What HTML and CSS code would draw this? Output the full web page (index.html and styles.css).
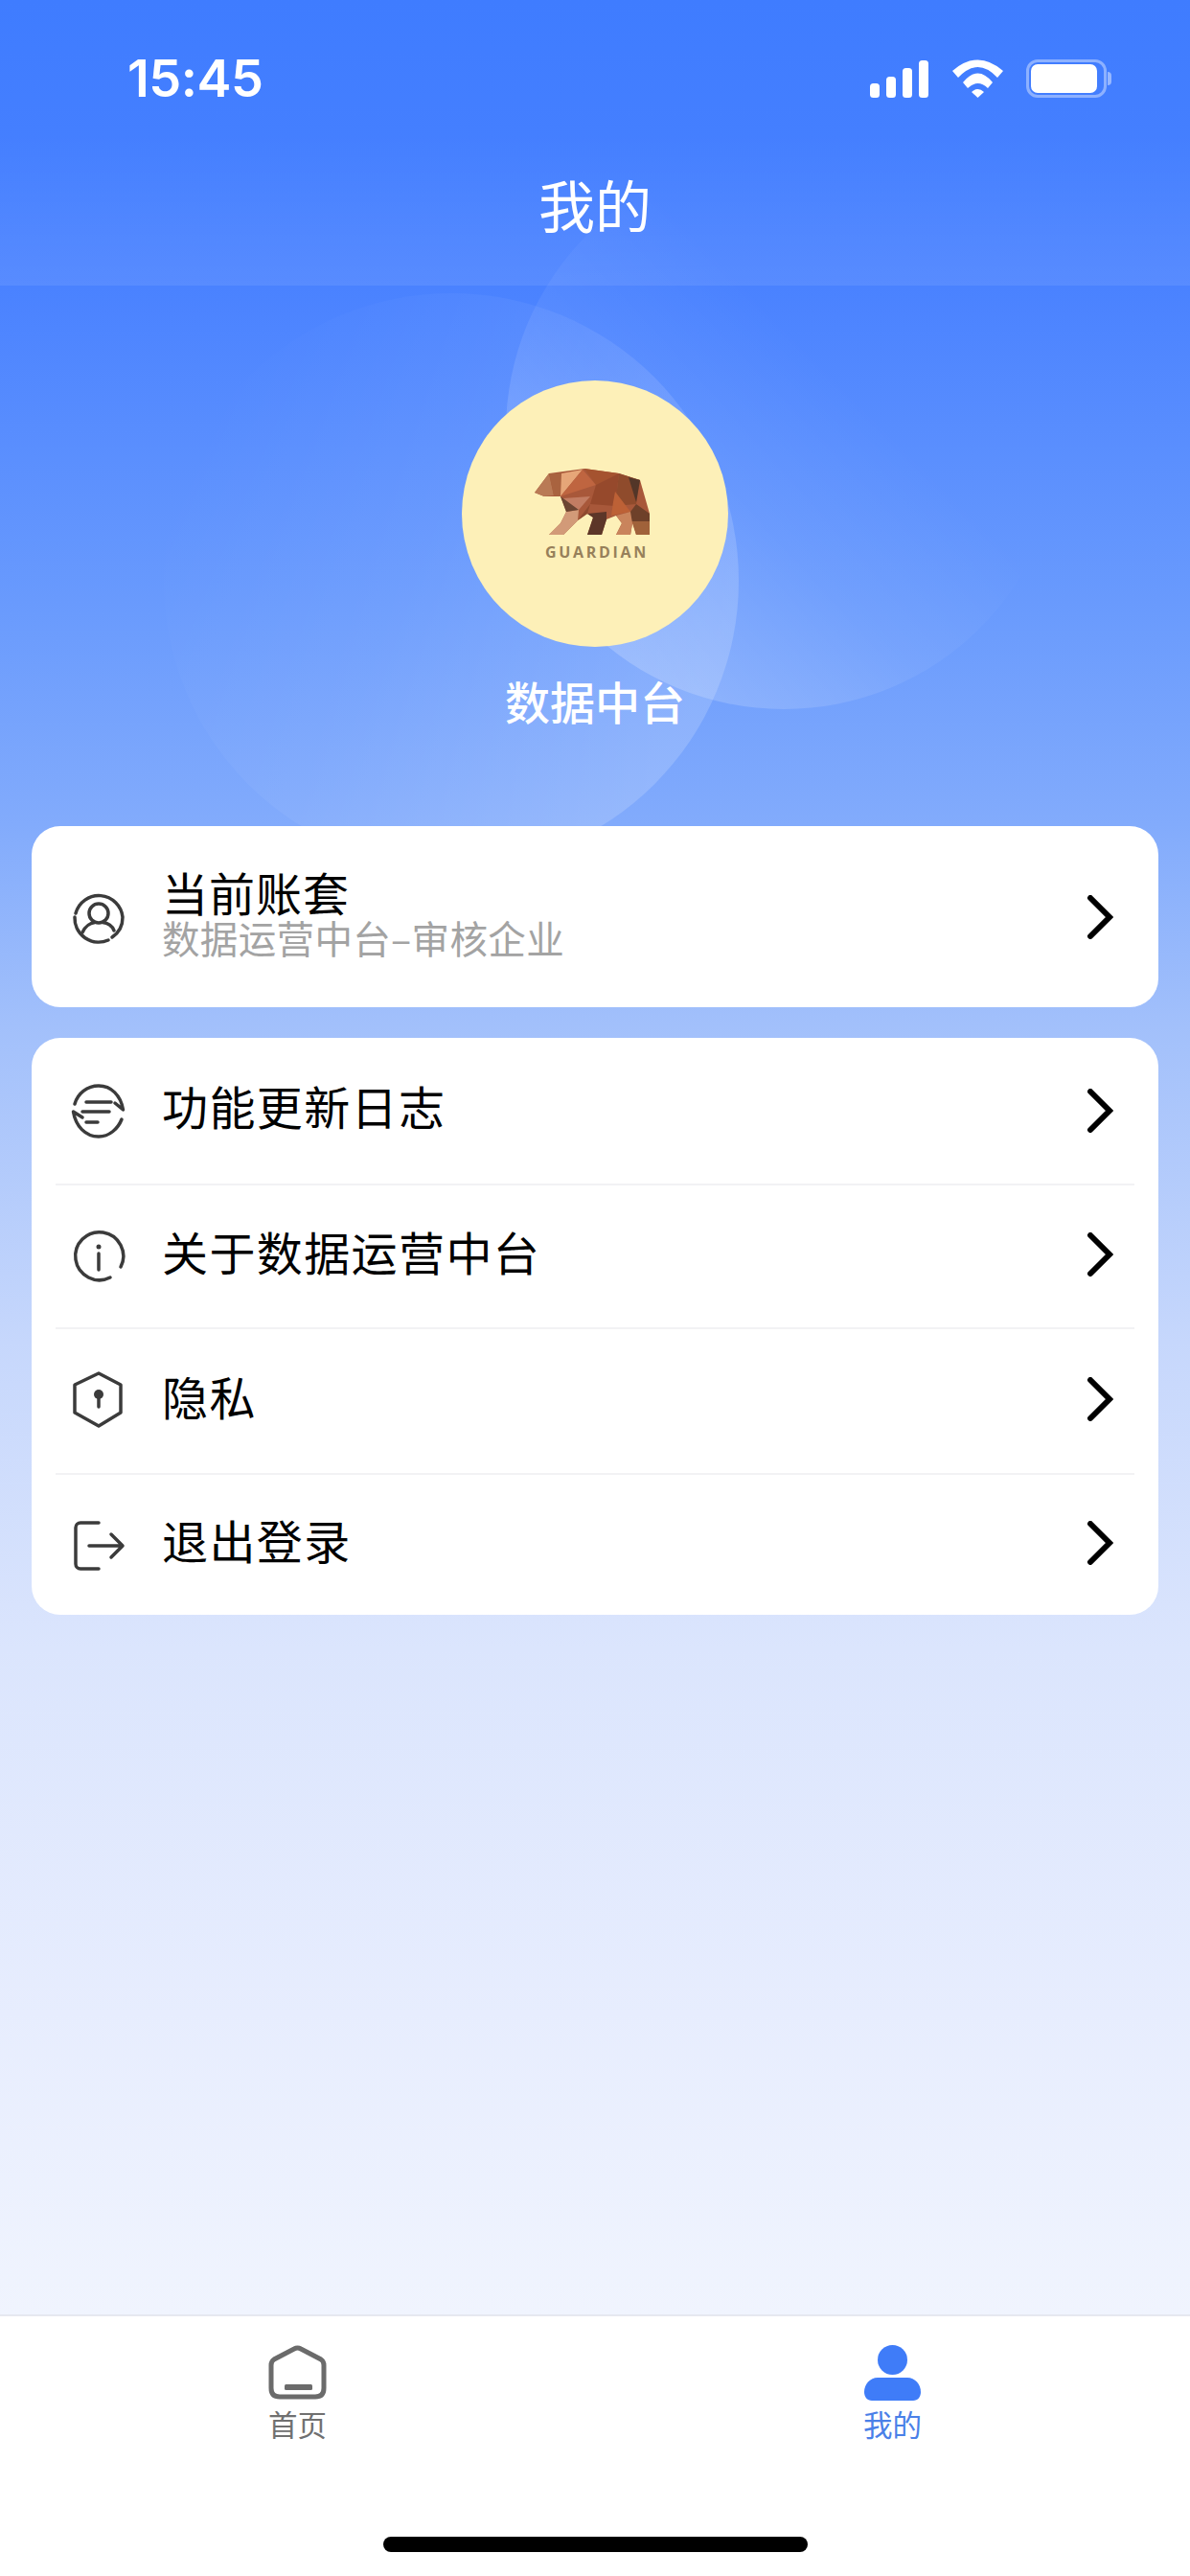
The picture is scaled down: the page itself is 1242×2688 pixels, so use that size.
FILE: index.html
```html
<!DOCTYPE html>
<html lang="zh-CN">
<head>
<meta charset="utf-8">
<title>我的</title>
<link rel="stylesheet" href="styles.css">
</head>
<body>
<div class="screen">
  <div class="orb orb-a"></div>
  <div class="orb orb-b"></div>

  <header class="header">
    <div class="status">
      <span class="time">15:45</span>
      <div class="status-icons">
        <svg class="signal" viewBox="0 0 61 39"><rect x="0" y="24" width="10" height="15" rx="3.5"/><rect x="17" y="17" width="10" height="22" rx="3.5"/><rect x="34" y="8" width="10" height="31" rx="3.5"/><rect x="51" y="0" width="10" height="39" rx="3.5"/></svg>
        <svg class="wifi" viewBox="0 0 54 40"><path d="M0 12Q26.500 -11 53 12L47 19Q26.500 -3 6 19Z"/><path d="M11 24Q26.500 5 42 24L37 30Q26.500 20 16 30Z"/><path d="M20 34Q26.500 28 33 34L26.500 40Z"/></svg>
        <div class="battery"><div class="battery-fill"></div></div>
      </div>
    </div>
    <h1 class="title">我的</h1>
  </header>

  <section class="profile">
    <div class="avatar">
      <svg class="bear" viewBox="0 0 120 70">
        <polygon points="0,26 15,6 52,1 88,6 110,13 120,48 120,70 106,70 102,58 100,70 85,70 91,58 85,50 75,54 70,70 55,70 61,52 55,48 45,55 30,70 15,70 27,58 33,46 27,30 10,30" fill="#a8583a"/>
        <polygon points="0,26 15,6 20,29 10,30" fill="#b97a55"/>
        <polygon points="15,6 28,6 27,30 20,29" fill="#a9633f"/>
        <polygon points="28,6 50,2 27,30" fill="#e6a678"/>
        <polygon points="50,2 64,18 27,30" fill="#bf6540"/>
        <polygon points="52,1 88,6 64,18" fill="#a5532f"/>
        <polygon points="64,18 88,6 84,40 58,38" fill="#96492c"/>
        <polygon points="30,32 58,30 46,44 36,45" fill="#c27d63"/>
        <polygon points="88,6 110,13 106,38 84,40" fill="#8f4b2c"/>
        <polygon points="98,10 110,13 106,36" fill="#533628"/>
        <polygon points="84,25 100,46 80,50 82,36" fill="#bd6136"/>
        <polygon points="106,38 120,48 120,58 100,56 100,46" fill="#6e4029"/>
        <polygon points="120,56 120,70 106,70 102,56" fill="#a0623a"/>
        <polygon points="85,50 100,46 102,58 100,70 85,70 91,58" fill="#c9845c"/>
        <polygon points="33,46 46,44 45,55 30,70 15,70 27,58" fill="#d29a78"/>
        <polygon points="27,30 46,44 33,46" fill="#6b4532"/>
        <polygon points="55,48 75,46 75,54 70,70 55,70 61,52" fill="#5c3628"/>
        <polygon points="45,55 58,38 55,48" fill="#8e4a2e"/>
      </svg>
      <span class="brand">GUARDIAN</span>
    </div>
    <p class="name">数据中台</p>
  </section>

  <main class="cards">
    <section class="card">
      <div class="row row-first">
        <svg class="icon" viewBox="0 0 56 56"><path d="M4 24A25 25 0 0 1 53 28A25 25 0 0 1 42 49M38 52A25 25 0 0 1 3 28"/><circle cx="28" cy="24" r="10"/><path d="M11 44C14 37 20 34 24 33.500M32 33.500C37 34 42 37 44 42"/></svg>
        <div class="stack">
          <span class="label">当前账套</span>
          <span class="sub">数据运营中台–审核企业</span>
        </div>
        <svg class="chevron" viewBox="0 0 28 46"><path d="M4 3L24 23L4 43"/></svg>
      </div>
    </section>

    <section class="card">
      <div class="row row-a">
        <svg class="icon" viewBox="0 0 56 56"><path d="M3 21C6 10 16 2 28 2C41 2 51 12 53.500 27L45 20"/><path d="M52 37C48 47 39 55 28 55C14 55 4 44 1.500 29L11 35"/><path d="M15 19H41M11 29H39M15 40H27"/></svg>
        <span class="label">功能更新日志</span>
        <svg class="chevron" viewBox="0 0 28 46"><path d="M4 3L24 23L4 43"/></svg>
      </div>
      <div class="row">
        <svg class="icon" viewBox="0 0 56 56"><path d="M40 50A25 25 0 1 1 51 39"/><circle class="solid" cx="28" cy="18" r="2.500"/><path d="M28 25V42"/></svg>
        <span class="label">关于数据运营中台</span>
        <svg class="chevron" viewBox="0 0 28 46"><path d="M4 3L24 23L4 43"/></svg>
      </div>
      <div class="row row-c">
        <svg class="icon" viewBox="0 0 56 56"><path d="M28 -1L51 11V40L28 54L3 40V11Z"/><circle class="solid" cx="28" cy="21" r="5"/><path d="M28 24V34"/></svg>
        <span class="label">隐私</span>
        <svg class="chevron" viewBox="0 0 28 46"><path d="M4 3L24 23L4 43"/></svg>
      </div>
      <div class="row row-z">
        <svg class="icon" viewBox="0 0 56 56"><path d="M28 5H9A5 5 0 0 0 4 10V48A5 5 0 0 0 9 53H28"/><path d="M18 29H53M41 17L53 29L41 41"/></svg>
        <span class="label">退出登录</span>
        <svg class="chevron" viewBox="0 0 28 46"><path d="M4 3L24 23L4 43"/></svg>
      </div>
    </section>
  </main>

  <nav class="tabbar">
    <div class="tabs">
      <div class="tab">
        <svg class="tab-icon" viewBox="0 0 61 57"><path class="home" d="M27 4L6 15Q3 17 3 21V45Q3 54 12 54H49Q58 54 58 45V21Q58 17 55 15L34 4Q30.500 2 27 4Z"/><rect x="17" y="41" width="29" height="6" rx="1.500" class="home-bar"/></svg>
        <span class="tab-label">首页</span>
      </div>
      <div class="tab tab-active">
        <svg class="tab-icon" viewBox="0 0 61 57"><ellipse cx="30.500" cy="15.500" rx="15.500" ry="15.500" class="me"/><path class="me" d="M15 34H46C54 34 60 41 60 49C60 54 57 58 52 58H9C4 58 1 54 1 49C1 41 7 34 15 34Z"/></svg>
        <span class="tab-label">我的</span>
      </div>
    </div>
    <div class="home-indicator"></div>
  </nav>
</div>
</body>
</html>
```
FILE: styles.css
```css
* { box-sizing: border-box; }
html, body { margin: 0; padding: 0; }
body { font-family: "Noto Sans CJK SC", "Noto Sans", sans-serif; }

.screen {
  position: relative;
  width: 1242px;
  height: 2688px;
  overflow: hidden;
  display: flex;
  flex-direction: column;
  background: linear-gradient(180deg, #3f7cff 0, #4a82ff 300px, #6a9bfd 640px, #82abfc 860px, #a2c0fb 1070px, #c6d7fc 1400px, #dbe5fd 1720px, #e7edfe 2100px, #f0f4fe 2415px);
}

.orb { position: absolute; border-radius: 50%; }
.orb-a {
  left: 171px; top: 306px; width: 600px; height: 600px;
  background: linear-gradient(115deg, rgba(255,255,255,0) 12%, rgba(255,255,255,.05) 45%, rgba(255,255,255,.17) 85%);
}
.orb-b {
  left: 528px; top: 160px; width: 580px; height: 580px;
  background: linear-gradient(225deg, rgba(255,255,255,0) 40%, rgba(255,255,255,.06) 60%, rgba(255,255,255,.2) 85%);
}

.header {
  position: relative;
  height: 298px;
  background: linear-gradient(180deg, rgba(255,255,255,0) 140px, rgba(255,255,255,.08) 298px);
  color: #fff;
}
.status {
  display: flex;
  align-items: center;
  justify-content: space-between;
  height: 40px;
  padding: 0 84px 0 133px;
  position: relative;
  top: 62px;
}
.time {
  font-family: Inter, "Liberation Sans", sans-serif;
  font-size: 54px;
  font-weight: 600;
  line-height: 40px;
  letter-spacing: -.5px;
}
.status-icons { display: flex; align-items: center; gap: 23px; }
.signal { width: 61px; height: 39px; margin-right: 2px; fill: #fff; }
.wifi { width: 54px; height: 40px; overflow: visible; fill: #fff; }
.battery {
  position: relative;
  width: 84px;
  height: 40px;
  padding: 2px 7px 2px 2px;
  border: 3px solid rgba(255,255,255,.4);
  border-radius: 12px;
  margin-right: 3px;
}
.battery::after {
  content: "";
  position: absolute;
  right: -8px;
  top: 10px;
  width: 4px;
  height: 14px;
  border-radius: 0 4px 4px 0;
  background: rgba(255,255,255,.45);
}
.battery-fill { height: 100%; background: #fff; border-radius: 7px; }
.title {
  margin: 0;
  padding-top: 133px;
  text-align: center;
  font-size: 59px;
  font-weight: 400;
  line-height: 80px;
}

.profile {
  position: relative;
  display: flex;
  flex-direction: column;
  align-items: center;
  padding-top: 99px;
}
.avatar {
  display: flex;
  flex-direction: column;
  align-items: center;
  width: 278px;
  height: 278px;
  padding-top: 91px;
  border-radius: 50%;
  background: #fdf0b8;
}
.bear { width: 120px; height: 70px; margin-left: -6px; }
.brand {
  margin: 8px 0 0 4px;
  font-family: "Open Sans", sans-serif;
  font-size: 16px;
  font-weight: 700;
  line-height: 20px;
  letter-spacing: 2.700px;
  color: #97805a;
}
.name {
  margin: 24px 0 0;
  font-size: 47px;
  font-weight: 500;
  line-height: 64px;
  color: #fff;
}

.cards {
  position: relative;
  display: flex;
  flex-direction: column;
  gap: 32px;
  padding: 0 33px;
  margin-top: 99px;
}
.card {
  background: #fff;
  border-radius: 30px;
  overflow: hidden;
}
.row {
  display: flex;
  align-items: center;
  height: 150px;
  margin: 0 25px;
  padding: 0 22px 0 17px;
  border-top: 2px solid #f2f2f4;
}
.row-first { height: 189px; border-top: 0; }
.row-a { height: 152px; border-top: 0; }
.row-c { height: 152px; }
.row-z { height: 148px; }
.icon {
  flex: none;
  width: 56px;
  height: 56px;
  overflow: visible;
  fill: none;
  stroke: #3b3b3b;
  stroke-width: 3.5;
  stroke-linecap: round;
  stroke-linejoin: round;
}
.icon .solid { fill: #3b3b3b; stroke: none; }
.label {
  display: block;
  margin-left: 38px;
  font-size: 48px;
  line-height: 52px;
  letter-spacing: 1.400px;
  color: #000;
  position: relative;
  top: -6px;
}
.stack { display: flex; flex-direction: column; flex: 1; margin-left: 38px; }
.stack .label { margin-left: 0; line-height: 48px; top: 0; margin-top: -5px; letter-spacing: 1px; }
.sub {
  font-size: 39.500px;
  line-height: 48px;
  letter-spacing: .35px;
  color: #a3a3a3;
}
.chevron {
  flex: none;
  width: 28px;
  height: 46px;
  margin-left: auto;
  margin-bottom: 5px;
  fill: none;
  stroke: #000;
  stroke-width: 6;
  stroke-linecap: round;
  stroke-linejoin: miter;
}
.row-first .chevron, .row-a .chevron { margin-bottom: 0; }

.tabbar {
  position: absolute;
  left: 0;
  right: 0;
  bottom: 0;
  height: 273px;
  background: #fff;
  border-top: 2px solid #e6e8f0;
  display: flex;
  flex-direction: column;
}
.tabs {
  display: grid;
  grid-template-columns: 1fr 1fr;
  padding-top: 30px;
}
.tab {
  display: flex;
  flex-direction: column;
  align-items: center;
  color: #707070;
}
.tab-icon { width: 61px; height: 57px; overflow: visible; }
.home { fill: none; stroke: #6b6b6b; stroke-width: 5; }
.home-bar { fill: #6b6b6b; }
.me { fill: #3f7cf8; }
.tab-label { margin-top: 5px; font-size: 30.500px; line-height: 40px; }
.tab-active { color: #4a80e8; }
.home-indicator {
  width: 443px;
  height: 16px;
  margin: auto auto 25px;
  border-radius: 8px;
  background: #000;
}
```
